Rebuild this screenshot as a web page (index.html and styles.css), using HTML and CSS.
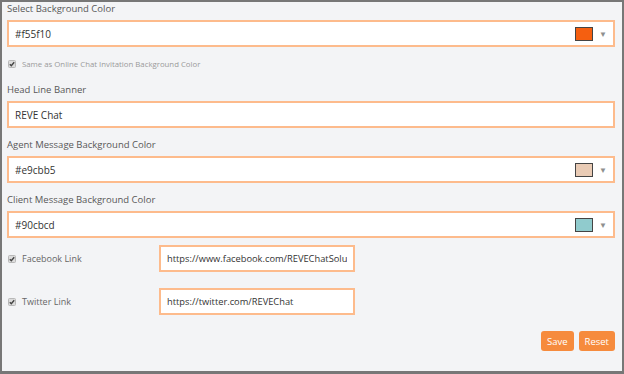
FILE: index.html
```html
<!DOCTYPE html>
<html lang="en">
<head>
    <meta charset="UTF-8">
    <title>Chat Window Settings</title>
    <link rel="stylesheet" href="styles.css">
</head>
<body>
    <div class="panel">
        <form class="settings">
            <label class="field-label">Select Background Color</label>
            <div class="text-box color-box">
                <span class="value">#f55f10</span>
                <span class="swatch swatch-main"></span>
                <span class="caret">&#9660;</span>
            </div>

            <div class="check-row small">
                <svg class="check" width="8" height="8" viewBox="0 0 8 8"><rect x="0.5" y="0.5" width="7" height="7" rx="1" fill="#dcdcdc" stroke="#b8b8b8"/><path d="M1.8 4.2 L3.3 5.7 L6.2 2.2" fill="none" stroke="#444" stroke-width="1.4"/></svg>
                <span>Same as Online Chat Invitation Background Color</span>
            </div>

            <label class="field-label">Head Line Banner</label>
            <div class="text-box">
                <span class="value">REVE Chat</span>
            </div>

            <label class="field-label">Agent Message Background Color</label>
            <div class="text-box color-box">
                <span class="value">#e9cbb5</span>
                <span class="swatch swatch-agent"></span>
                <span class="caret">&#9660;</span>
            </div>

            <label class="field-label">Client Message Background Color</label>
            <div class="text-box color-box">
                <span class="value">#90cbcd</span>
                <span class="swatch swatch-client"></span>
                <span class="caret">&#9660;</span>
            </div>

            <div class="link-row first">
                <div class="check-row">
                    <svg class="check" width="8" height="8" viewBox="0 0 8 8"><rect x="0.5" y="0.5" width="7" height="7" rx="1" fill="#dcdcdc" stroke="#b8b8b8"/><path d="M1.8 4.2 L3.3 5.7 L6.2 2.2" fill="none" stroke="#444" stroke-width="1.4"/></svg>
                    <span>Facebook Link</span>
                </div>
                <div class="text-box link-box"><span class="value">https://www.facebook.com/REVEChatSolu</span></div>
            </div>

            <div class="link-row">
                <div class="check-row">
                    <svg class="check" width="8" height="8" viewBox="0 0 8 8"><rect x="0.5" y="0.5" width="7" height="7" rx="1" fill="#dcdcdc" stroke="#b8b8b8"/><path d="M1.8 4.2 L3.3 5.7 L6.2 2.2" fill="none" stroke="#444" stroke-width="1.4"/></svg>
                    <span>Twitter Link</span>
                </div>
                <div class="text-box link-box"><span class="value">https://twitter.com/REVEChat</span></div>
            </div>

            <div class="actions">
                <button type="button" class="btn">Save</button>
                <button type="button" class="btn">Reset</button>
            </div>
        </form>
    </div>
</body>
</html>
```

FILE: styles.css
```css
html, body {
    margin: 0;
    padding: 0;
}
body {
    font-family: "Open Sans", Arial, sans-serif;
    background-color: #f3f4f6;
}
.panel {
    box-sizing: border-box;
    width: 624px;
    height: 374px;
    border: 2px solid #777;
    border-bottom-width: 3px;
    background-color: #f3f4f6;
    padding: 0 7px 0 5px;
}
.field-label {
    display: block;
    font-size: 9.5px;
    line-height: 14px;
    color: #585858;
    margin-bottom: 4px;
}
.text-box {
    box-sizing: border-box;
    height: 27px;
    background-color: #fff;
    border: 2px solid #fdbb8c;
    display: flex;
    align-items: center;
    padding: 0 6px;
    margin-bottom: 10px;
}
.value {
    flex: 1;
    font-size: 10px;
    color: #333;
    white-space: nowrap;
    overflow: hidden;
}
.swatch {
    box-sizing: border-box;
    width: 18px;
    height: 14px;
    border: 1px solid #444;
    margin-right: 6px;
}
.swatch-main { background-color: #f55f10; }
.swatch-agent { background-color: #e9cbb5; }
.swatch-client { background-color: #90cbcd; }
.caret {
    font-size: 8px;
    color: #8f8f8f;
}
.check-row {
    display: flex;
    align-items: center;
    gap: 6px;
    padding-left: 1px;
    font-size: 9px;
    line-height: 14px;
    color: #666;
}
.check-row.small {
    font-size: 7.8px;
    color: #9a9a9a;
    margin-top: 3px;
    margin-bottom: 12px;
}
.check {
    flex: none;
}
.link-row {
    display: flex;
    align-items: center;
    margin-bottom: 16px;
}
.link-row.first {
    margin-top: -3px;
}
.link-row .check-row {
    width: 151px;
}
.link-box {
    width: 196px;
    height: 27px;
    margin-bottom: 0;
    padding: 0 6px;
}
.link-box .value {
    font-size: 9.3px;
}
.actions {
    display: flex;
    justify-content: flex-end;
    gap: 5px;
    margin-top: 4px;
}
.btn {
    font-family: "Open Sans", Arial, sans-serif;
    background-color: #f68b3d;
    color: #fff;
    border: none;
    border-radius: 3px;
    height: 20px;
    padding: 0 6px;
    font-size: 9.5px;
    cursor: pointer;
}
.btn:hover {
    background-color: #e47a2c;
}
```
